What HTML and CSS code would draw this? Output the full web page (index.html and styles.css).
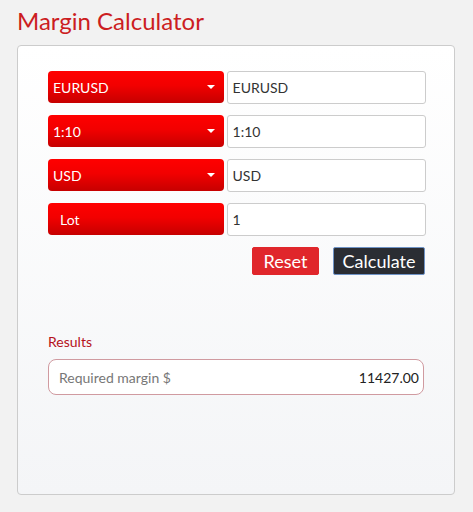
FILE: index.html
```html
<!DOCTYPE html>
<html>
<head>
<meta charset="utf-8">
<link rel="stylesheet" href="styles.css">
</head>
<body>
<h1 class="title">Margin Calculator</h1>
<div class="card">
  <div class="rows">
    <div class="row">
      <div class="select"><span>EURUSD</span><span class="caret"></span></div>
      <div class="input">EURUSD</div>
    </div>
    <div class="row">
      <div class="select"><span>1:10</span><span class="caret"></span></div>
      <div class="input">1:10</div>
    </div>
    <div class="row">
      <div class="select"><span>USD</span><span class="caret"></span></div>
      <div class="input">USD</div>
    </div>
    <div class="row">
      <div class="select lot"><span>Lot</span></div>
      <div class="input">1</div>
    </div>
  </div>
  <div class="actions">
    <button class="btn reset">Reset</button>
    <button class="btn calc">Calculate</button>
  </div>
  <div class="results-label">Results</div>
  <div class="result">
    <span class="result-name">Required margin $</span>
    <span class="result-value">11427.00</span>
  </div>
</div>
</body>
</html>
```

FILE: styles.css
```css
* { box-sizing: border-box; }
html, body { margin: 0; padding: 0; }
body {
  background: #f2f2f2;
  font-family: Lato, "Open Sans", sans-serif;
  width: 473px;
  height: 512px;
  overflow: hidden;
}
.title {
  margin: 0;
  padding: 6px 0 0 17px;
  height: 45px;
  font-size: 24px;
  line-height: 29px;
  font-weight: 400;
  color: #cc1d22;
}
.card {
  margin-left: 17px;
  width: 438px;
  height: 450px;
  border: 1px solid #cccccc;
  border-radius: 4px;
  background: linear-gradient(to bottom, #ffffff 0%, #f4f5f7 100%);
  padding: 25px 28px 0 30px;
}
.rows {
  display: flex;
  flex-direction: column;
  gap: 11px;
}
.row {
  display: flex;
  gap: 3px;
  height: 33px;
}
.select {
  width: 176px;
  height: 32px;
  border-radius: 4px;
  background: linear-gradient(to bottom, #ff0000 0%, #f20000 45%, #c60000 100%);
  color: #ffffff;
  font-size: 14px;
  display: flex;
  align-items: center;
  justify-content: space-between;
  padding: 0 9px 0 5px;
}
.select.lot { padding-left: 12px; }
.caret {
  width: 0;
  height: 0;
  border-left: 4px solid transparent;
  border-right: 4px solid transparent;
  border-top: 4px solid #ffffff;
}
.input {
  width: 200px;
  height: 33px;
  background: #ffffff;
  border: 1px solid #cccccc;
  border-radius: 3px;
  font-size: 14px;
  color: #333333;
  display: flex;
  align-items: center;
  padding-left: 5px;
}
.actions {
  display: flex;
  justify-content: flex-end;
  gap: 14px;
  margin-top: 11px;
  padding-right: 1px;
}
.btn {
  height: 28px;
  font-family: Lato, "Open Sans", sans-serif;
  font-size: 18px;
  color: #ffffff;
  border-radius: 2px;
  padding: 0;
  line-height: 26px;
}
.reset {
  width: 67px;
  background: #e0262b;
  border: 1px solid #e0262b;
}
.calc {
  width: 92px;
  background: #2a2d33;
  border: 1px solid #6f93c6;
}
.results-label {
  margin-top: 58px;
  font-size: 14px;
  line-height: 17px;
  color: #b5121b;
}
.result {
  margin-top: 9px;
  width: 376px;
  height: 36px;
  background: #ffffff;
  border: 1px solid #d09aa0;
  border-radius: 8px;
  display: flex;
  align-items: center;
  justify-content: space-between;
  padding: 0 4px 0 10px;
  font-size: 14px;
}
.result-name { color: #777777; }
.result-value { color: #222222; }
```
